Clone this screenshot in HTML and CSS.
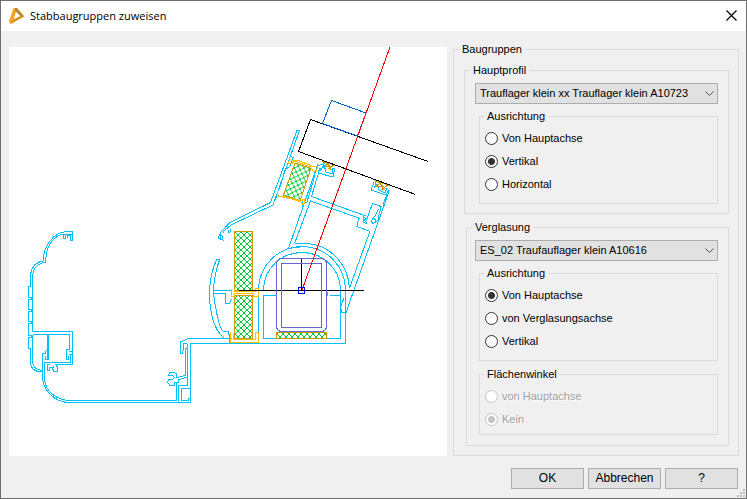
FILE: index.html
```html
<!DOCTYPE html>
<html lang="de">
<head>
<meta charset="utf-8">
<title>Stabbaugruppen zuweisen</title>
<link rel="stylesheet" href="styles.css">
</head>
<body>
<main class="dialog">
  <header class="titlebar">
    <svg class="logo" viewBox="0 0 16 18" aria-hidden="true">
      <path d="M4.500 1L8 1L6 9L3.500 16L1 17L0 14Z" fill="#f5a623"/>
      <path d="M6 1L8 1L15 9L13 11L6 4Z" fill="#b8862f"/>
      <path d="M13 8L15 9.500L2 17L4 12.500Z" fill="#d79222"/>
      <path d="M7 5L11 9L5 12Z" fill="#fff"/>
    </svg>
    <h1 class="title">Stabbaugruppen zuweisen</h1>
    <button class="close" type="button" aria-label="Schließen">
      <svg viewBox="0 0 11 11" width="11" height="11" aria-hidden="true"><path d="M.5 .5L10.500 10.500M10.500 .5L.5 10.500" stroke="#000" stroke-width="1.200"/></svg>
    </button>
  </header>
  <form class="content">
    <div class="preview">
      <svg class="drawing" viewBox="9 47 438 409" role="img" aria-label="Profilschnitt">
        <defs>
          <pattern id="hatch" width="6" height="6" x="235" y="232" patternUnits="userSpaceOnUse">
            <path d="M-1 -1L7 7M-1 7L7 -1" stroke="#0c3" stroke-width="1" fill="none"/>
          </pattern>
          <pattern id="hatch-tilted" width="6" height="6" patternUnits="userSpaceOnUse" patternTransform="rotate(19)">
            <path d="M-1 -1L7 7M-1 7L7 -1" stroke="#0c3" stroke-width="1" fill="none"/>
          </pattern>
        </defs>
        <g class="cyan">
          <path d="M72.500 240V231.500H66C54 233 44 244 43 261C36 262 31.500 267 30.500 275V286.500H28.500V297.500H31V299.500H28.500V309.500H31V311.500H28.500V321.500H31V323.500H28.500V335.500H31V337.500H28.500V348.500H30.500V363C31 369 35 372 42.500 372"/>
          <path d="M71.500 234H63C53 237 46 246 45.500 262.500C38 263 33 268 32.500 276V331.500H72.500V364.500H55M63 234V238.500H65V235M67 238V235.500H70V240H72.500"/>
          <path d="M32.500 334.500H69.500V349.500H66.500V359.500H68.500V355.500M32.500 334.500V362C33 367 37 370 42.500 370.500M47.500 334.500V359.500H45.500V356M48.500 334.500V359.500M45.500 350.500H48M45.500 350.500V353.500H42.500V377C43 391 55 402.500 70 402.500H190.500V390V388.500H181.500V400.500H188V398.500H190.500M69 351.500H72M69 354.500H72M70.500 355V362.500H44.500V379C45 391 57 400.500 70 400.500H176.500V382M50 364.500H47.500V370.500H49.500V367.500H52M54 366L52.500 368.500L54 371.500H57.500V367L55.500 364.500"/>
          <path d="M190.500 390V343.500H229.500V336M187.500 343.500V385.500H178.500V402M187 343.500H183.500V349L182.500 353H180.500V342L188 338.500H229M188 348.500H185.500V375.500L177 377.500L176 373.500L174 372.500H169.500L168.500 375.500H172.500L174.500 377.500L172.500 379.500H168.500L167.500 382.500L170 385.500H174.500V382.500H178.500V380L187 377"/>
          <path d="M216.500 259.500L219.500 260C214 275 212 293 216 309C218 321 221 330 223.500 331.500H228L229.500 336M216.500 259.500C210 275 207 294 212 316C214 326 219 334 225 339M213.500 290.500H230.500M213.500 293.500H225.500V303.500H229.500L231.500 299"/>
          <path d="M297 130.500H299.500L273 205L231 225L225 230L223 232.500M297 130.500L270.500 202.500L230 222.500L221 232L218 238L223 240L222 236L219 235.500M220 232.500V238M228 230V233L230 232L231 229"/>
          <path d="M290.500 156.500L293 157.500L290 166L285 170L280 187L278 191M277 196L275 200M302 201V208L304 203L307 202L315 175"/>
          <path d="M288.500 248.500L318 164M294.500 243.500L310.500 201L360 218.500M318 172L320 168L311.500 196.500L366 216"/>
          <path d="M389.500 190L346 312.500H342L340.500 307L344 298M387 194L383 205M369.500 232.500L349.500 288M358.500 218.500L357 226.500L370 231.500M372.500 203.500L381 206.500L378 220L373 224L371 221L375 216L378.500 209M372.500 203.500L366.500 220L363.500 216.500L363 222L367 224M363 218L366.500 223M373 217L377 222"/>
          <path d="M258.500 343V290C258.500 266 278 246.500 302 246.500S345.500 266 345.500 290V343.500H256M263.500 290C263.500 269 281 252.500 302 252.500S340.500 269 340.500 290V338.500H263.500V295.500H276V292M294.500 243.500L308 243.500C329 245 348 263 349.500 288M288.500 248.500L308 246M330 295.500H340.500M327 292V295.500"/>
          <path d="M190.500 338.500H232M190.500 343.500H345.500"/>
        </g>
        <g>
          <path class="hatch" d="M234.500 231.500H252.500V290.500H234.500ZM234.500 295.500H252.500V338.500H234.500ZM276.500 332.500H326.500V338.500H276.500Z"/>
          <path class="tilted" d="M295 163L311 168.500L300 201L283.500 195Z"/>
          <path class="gold" d="M231 288.500V296.500H234V293.500H253V296.500H258V288.500H255V291.500H234V289M230.500 332V342.500H258V332.500H255V339.500H233V333M289.500 159L288.500 163.500L292 164L294 161L311 167L313 171L316 172L317.500 167L312 166L297 160L293 161ZM278 191L277 195L280 197L283 196L301 202L303 205L305 202L304 199L301 201L283 197"/>
          <path class="ochre" d="M322 161.500L336 165.500M323 162V166H330V170L334 168M326 163L331 167M323 168L329 163M328 169L334 165M375 180.500L390 185.500M375 181V186H382V190L388 188M378 182L385 188M375 187L382 182M381 190L388 185"/>
        </g>
        <g class="cyan">
          <path d="M318 166L325 163M321 168L318 173L333 177L335 168M320 171L324 165L326 172L332 174L333 168M374 182L371 190L386 195L389 190M374 188L377 184L379 190L385 193L387 188"/>
        </g>
        <path class="black" d="M428 161.500L310.500 119.500L298.500 151.500L415.500 194.500M239 290.500H364M301.500 259V290"/>
        <path class="blue" d="M331.500 100.500L366 113L357.500 136L322.500 123.500Z"/>
        <g class="violet"><rect x="276.500" y="258.500" width="50" height="73" rx="5"/><rect x="281.500" y="263.500" width="40" height="64"/></g>
        <path class="red" d="M302 290L390 47"/>
        <rect class="anchor" x="298.500" y="287.500" width="6" height="6"/>
      </svg>
    </div>
    <fieldset class="group assemblies">
      <legend>Baugruppen</legend>
      <fieldset class="group profile">
        <legend>Hauptprofil</legend>
        <div class="combo">
          <select aria-label="Hauptprofil"><option>Trauflager klein xx Trauflager klein A10723</option></select>
          <svg class="arrow" viewBox="0 0 9 5" aria-hidden="true"><path d="M.5 .5L4.500 4.500L8.500 .5"/></svg>
        </div>
        <fieldset class="group options">
          <legend>Ausrichtung</legend>
          <label><input type="radio" name="profil">Von Hauptachse</label>
          <label><input type="radio" name="profil" checked>Vertikal</label>
          <label><input type="radio" name="profil">Horizontal</label>
        </fieldset>
      </fieldset>
      <fieldset class="group glazing">
        <legend>Verglasung</legend>
        <div class="combo">
          <select aria-label="Verglasung"><option>ES_02 Traufauflager klein A10616</option></select>
          <svg class="arrow" viewBox="0 0 9 5" aria-hidden="true"><path d="M.5 .5L4.500 4.500L8.500 .5"/></svg>
        </div>
        <fieldset class="group options">
          <legend>Ausrichtung</legend>
          <label><input type="radio" name="glas" checked>Von Hauptachse</label>
          <label><input type="radio" name="glas">von Verglasungsachse</label>
          <label><input type="radio" name="glas">Vertikal</label>
        </fieldset>
        <fieldset class="group options angle" disabled>
          <legend>Flächenwinkel</legend>
          <label><input type="radio" name="winkel">von Hauptachse</label>
          <label><input type="radio" name="winkel" checked>Kein</label>
        </fieldset>
      </fieldset>
    </fieldset>
  </form>
  <footer class="actions">
    <button type="button">OK</button>
    <button type="button">Abbrechen</button>
    <button type="button">?</button>
    <svg class="grip" viewBox="0 0 8 8" aria-hidden="true"><path d="M6 0h2v2H6zM3 3h2v2H3zM6 3h2v2H6zM0 6h2v2H0zM3 6h2v2H3zM6 6h2v2H6z" fill="#bfbfbf"/></svg>
  </footer>
</main>
</body>
</html>
```
FILE: styles.css
```css
* { box-sizing: border-box; }
body {
  margin: 0;
  font: 11px/13px "Liberation Sans", Arial, sans-serif;
  color: #000;
  background: #f0f0f0;
}
.dialog {
  display: flex;
  flex-direction: column;
  min-height: 100vh;
  border: 1px solid #6e6e6e;
  background: #f0f0f0;
}
.titlebar {
  display: flex;
  align-items: center;
  height: 30px;
  padding: 0 9px 0 8px;
  background: #fff;
}
.logo { width: 16px; height: 18px; }
.title {
  flex: 1;
  margin: 0 0 0 5px;
  font: 11px/16px "Open Sans", "Noto Sans", sans-serif;
}
.close {
  display: flex;
  padding: 0 0 2px;
  border: 0;
  background: none;
}
.content {
  flex: 1;
  display: grid;
  grid-template-columns: 1fr 286px;
  gap: 6px;
  padding: 12px 7px 0 8px;
}
.preview {
  margin-top: 4px;
  background: #fff;
}
.drawing { display: block; width: 100%; }
.drawing path, .drawing rect {
  fill: none;
  stroke-width: 1;
  shape-rendering: crispEdges;
}
.cyan path { stroke: #00bfff; }
.drawing .hatch { stroke: #c90; fill: url(#hatch); }
.drawing .tilted { stroke: #c90; fill: url(#hatch-tilted); }
.drawing .gold { stroke: #ffbf00; }
.drawing .ochre { stroke: #c90; }
.drawing .black { stroke: #000; }
.drawing .blue { stroke: #0066cc; }
.violet rect { stroke: #6666cc; }
.drawing .red { stroke: #f00; }
.drawing .anchor { stroke: #00f; }
.group {
  min-width: 0;
  margin: 0;
  border: 1px solid #dcdcdc;
}
.group > legend {
  margin-left: -1px;
  padding: 0 3px;
}
.assemblies { padding: 8px 9px 9px 10px; }
.assemblies > legend { margin-left: -5px; }
.profile { padding: 6px 10px 9px; }
.glazing {
  margin: 7px 0 0 2px;
  padding: 6px 10px 10px 8px;
}
.profile > legend { margin-left: -5px; }
.glazing > legend { margin-left: -3px; }
.combo { position: relative; }
.combo select {
  display: block;
  width: 100%;
  height: 21px;
  padding: 0 20px 0 4px;
  border: 1px solid #adadad;
  border-radius: 0;
  appearance: none;
  background: #e1e1e1;
  color: #000;
  font: inherit;
}
.arrow {
  position: absolute;
  top: 8px;
  right: 4px;
  width: 9px;
  height: 5px;
  fill: none;
  stroke: #505050;
  pointer-events: none;
}
.options {
  margin: 6px 0 0 4px;
  padding: 4px 5px 7px;
}
.options label {
  display: flex;
  align-items: center;
  gap: 4px;
  height: 23px;
}
.options input {
  width: 13px;
  height: 13px;
  margin: 0;
  border: 1px solid #333;
  border-radius: 50%;
  appearance: none;
  background: #fff;
}
.options input:checked { background: radial-gradient(circle, #333 3px, #fff 4px); }
.glazing .angle {
  margin-top: 7px;
  padding-bottom: 3px;
}
.angle label {
  color: #a0a0a0;
  text-shadow: 1px 1px #fff;
}
.options:disabled input { border-color: #c4c4c4; }
.options:disabled input:checked { background: radial-gradient(circle, #c4c4c4 3px, #fff 4px); }
.actions {
  position: relative;
  display: flex;
  justify-content: flex-end;
  gap: 4px;
  padding: 12px 8px 9px;
}
.actions button {
  width: 73px;
  height: 21px;
  padding: 0;
  border: 1px solid #adadad;
  background: #e1e1e1;
  color: #000;
  font: inherit;
  font-size: 12px;
}
.grip {
  position: absolute;
  right: 1px;
  bottom: 1px;
  width: 8px;
  height: 8px;
}
```
